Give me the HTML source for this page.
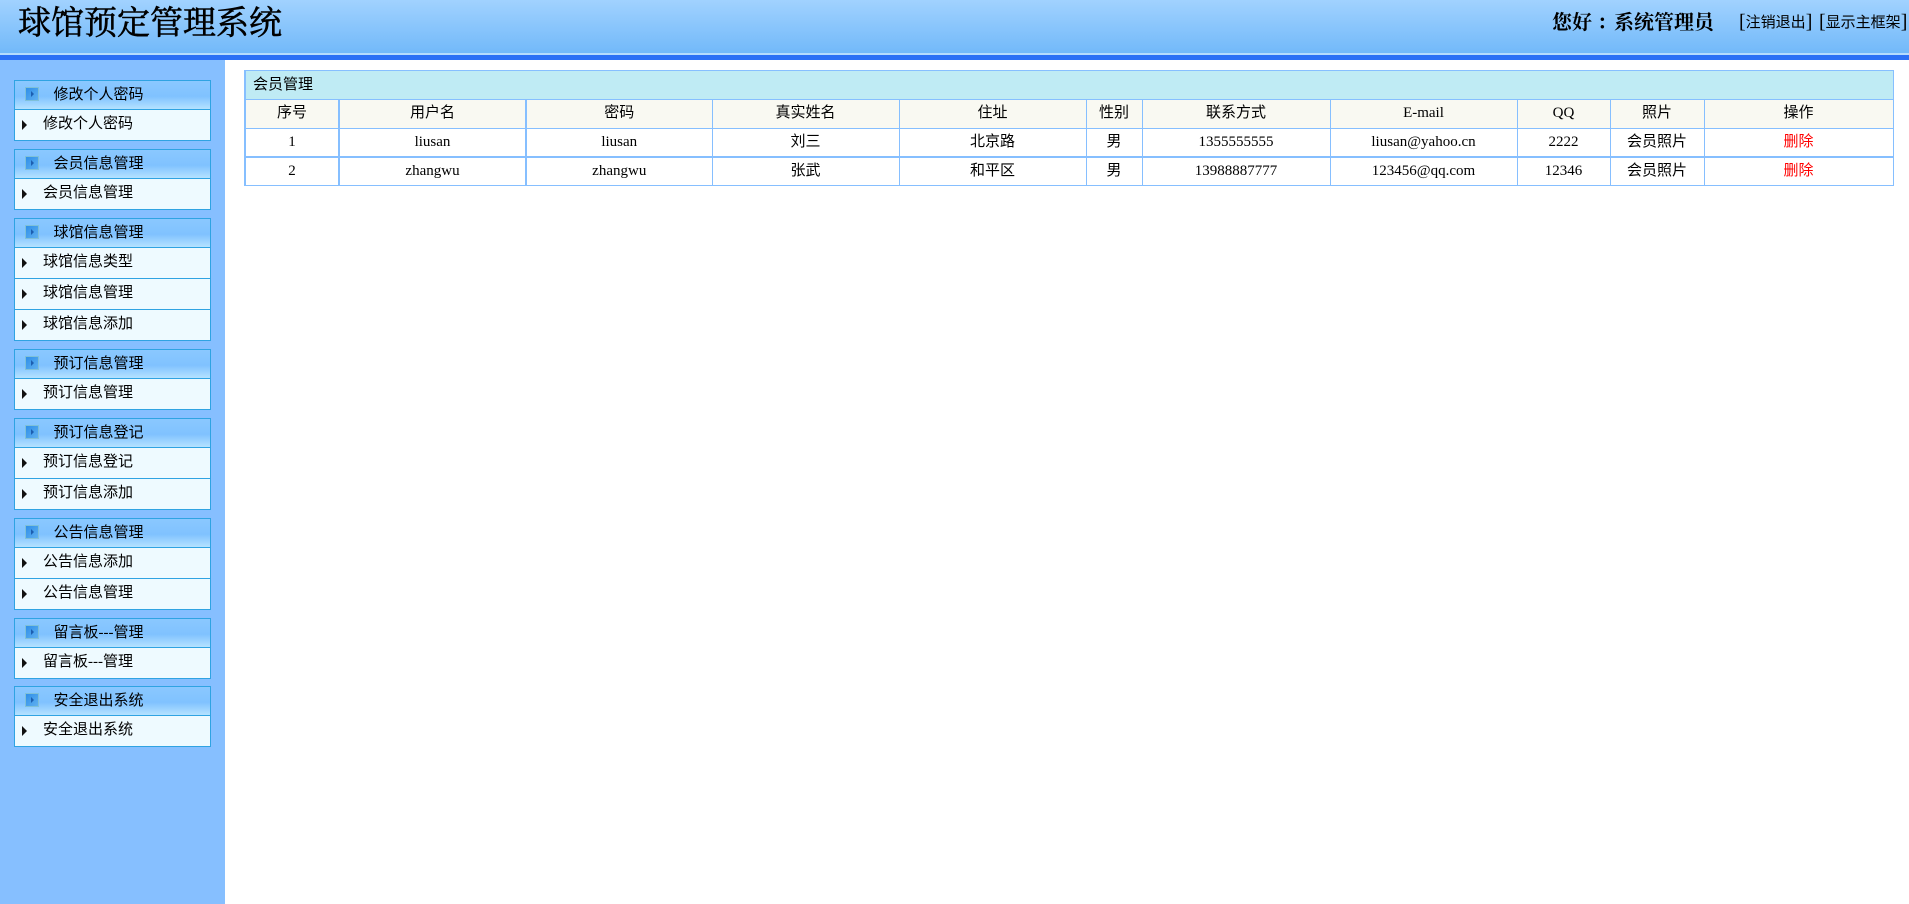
<!DOCTYPE html>
<html lang="zh">
<head>
<meta charset="utf-8">
<title>球馆预定管理系统</title>
<style>
html,body{margin:0;padding:0;width:1909px;height:904px;overflow:hidden;background:#fff;font-family:"Liberation Serif","WenQuanYi Zen Hei","Noto Sans CJK SC",serif;font-size:15px;color:#000}
#top{position:absolute;left:0;top:0;width:1909px;height:53px;background:linear-gradient(#a1d2ff,#72b9f9)}
#hl{position:absolute;left:0;top:53px;width:1909px;height:2px;background:#b5dcfd}
#bar{position:absolute;left:0;top:55px;width:1909px;height:5px;background:#2b70f5}
#title{position:absolute;left:18px;top:1px;font:33px/40px "Noto Serif CJK SC","Liberation Serif",serif;white-space:nowrap;-webkit-text-stroke:.6px #000}
#hello{position:absolute;left:1552px;top:9px;font:bold 20px/24px "Noto Serif CJK SC","Liberation Serif",serif;white-space:nowrap}
#hello span{position:relative;left:5px;margin-right:2px}
.hlink{position:absolute;top:11px;font-size:15px;line-height:22px;white-space:nowrap}
.hlink b{font-weight:normal;font-size:20px;vertical-align:-1px;font-family:"Liberation Serif",serif}
#side{position:absolute;left:0;top:60px;width:225px;height:844px;background:#86bfff}
.g{position:absolute;left:14px;width:195px;border:1px solid #2fa3e2;background:#eefaff}
.g .h{position:relative;height:28px;background:linear-gradient(#8ac8ff 0,#80c2ff 55%,#b4e2ff 100%);border-bottom:1px solid #2fa3e2;line-height:28px;padding-left:38.5px}
.g .h i{position:absolute;left:10px;top:6px;width:12px;height:12px;background:linear-gradient(135deg,#2f8fe8,#5fb0f0);border:1px solid #7fc0d8}
.g .h i:after{content:"";position:absolute;left:5px;top:3px;border-left:3px solid #1d5fb0;border-top:3px solid transparent;border-bottom:3px solid transparent}
.g .it{position:relative;height:30px;line-height:29px;padding-left:28px;border-top:1px solid #2fa3e2}
.g .h + .it{border-top:0}
.g .it:before{content:"";position:absolute;left:7px;top:10px;border-left:5px solid #111;border-top:5px solid transparent;border-bottom:5px solid transparent}
#tb{position:absolute;left:244px;top:70px;width:1648px;border-collapse:collapse;table-layout:fixed;text-align:center}
#tb td{border:1px solid #86bfff;padding:0 0 2px;height:26px;line-height:24px;vertical-align:middle}
#tb .cap td{background:#bfebf4;text-align:left;padding:0 0 0 7px;height:28px;border-left-width:2px}
#tb .th td{background:#f9f9f2}
#tb tr td:first-child{border-left-width:2px}
#tb tr:not(.cap) td:nth-child(1),#tb tr:not(.cap) td:nth-child(2){border-right-width:2px}
#tb tr.r1 td{border-bottom-width:2px;height:25px}
#tb tr.r2 td{height:25px}
#tb a{color:#f00;text-decoration:none}
</style>
</head>
<body>
<div id="top"></div><div id="hl"></div><div id="bar"></div>
<div id="title">球馆预定管理系统</div>
<div id="hello">您好<span>：</span>系统管理员</div>
<div class="hlink" style="left:1739px"><b>[</b>注销退出<b>]</b></div>
<div class="hlink" style="left:1819px"><b>[</b>显示主框架<b>]</b></div>
<div id="side"></div>
<div class="g" style="top:80px"><div class="h"><i></i>修改个人密码</div><div class="it">修改个人密码</div></div>
<div class="g" style="top:149px"><div class="h"><i></i>会员信息管理</div><div class="it">会员信息管理</div></div>
<div class="g" style="top:218px"><div class="h"><i></i>球馆信息管理</div><div class="it">球馆信息类型</div><div class="it">球馆信息管理</div><div class="it">球馆信息添加</div></div>
<div class="g" style="top:349px"><div class="h"><i></i>预订信息管理</div><div class="it">预订信息管理</div></div>
<div class="g" style="top:418px"><div class="h"><i></i>预订信息登记</div><div class="it">预订信息登记</div><div class="it">预订信息添加</div></div>
<div class="g" style="top:518px"><div class="h"><i></i>公告信息管理</div><div class="it">公告信息添加</div><div class="it">公告信息管理</div></div>
<div class="g" style="top:618px"><div class="h"><i></i>留言板---管理</div><div class="it">留言板---管理</div></div>
<div class="g" style="top:686px"><div class="h"><i></i>安全退出系统</div><div class="it">安全退出系统</div></div>
<table id="tb">
<colgroup><col style="width:94px"><col style="width:187px"><col style="width:186px"><col style="width:187px"><col style="width:187px"><col style="width:56px"><col style="width:188px"><col style="width:187px"><col style="width:93px"><col style="width:94px"><col style="width:189px"></colgroup>
<tr class="cap"><td colspan="11">会员管理</td></tr>
<tr class="th"><td>序号</td><td>用户名</td><td>密码</td><td>真实姓名</td><td>住址</td><td>性别</td><td>联系方式</td><td>E-mail</td><td>QQ</td><td>照片</td><td>操作</td></tr>
<tr class="r1"><td>1</td><td>liusan</td><td>liusan</td><td>刘三</td><td>北京路</td><td>男</td><td>1355555555</td><td>liusan@yahoo.cn</td><td>2222</td><td>会员照片</td><td><a>删除</a></td></tr>
<tr class="r2"><td>2</td><td>zhangwu</td><td>zhangwu</td><td>张武</td><td>和平区</td><td>男</td><td>13988887777</td><td>123456@qq.com</td><td>12346</td><td>会员照片</td><td><a>删除</a></td></tr>
</table>
</body>
</html>
